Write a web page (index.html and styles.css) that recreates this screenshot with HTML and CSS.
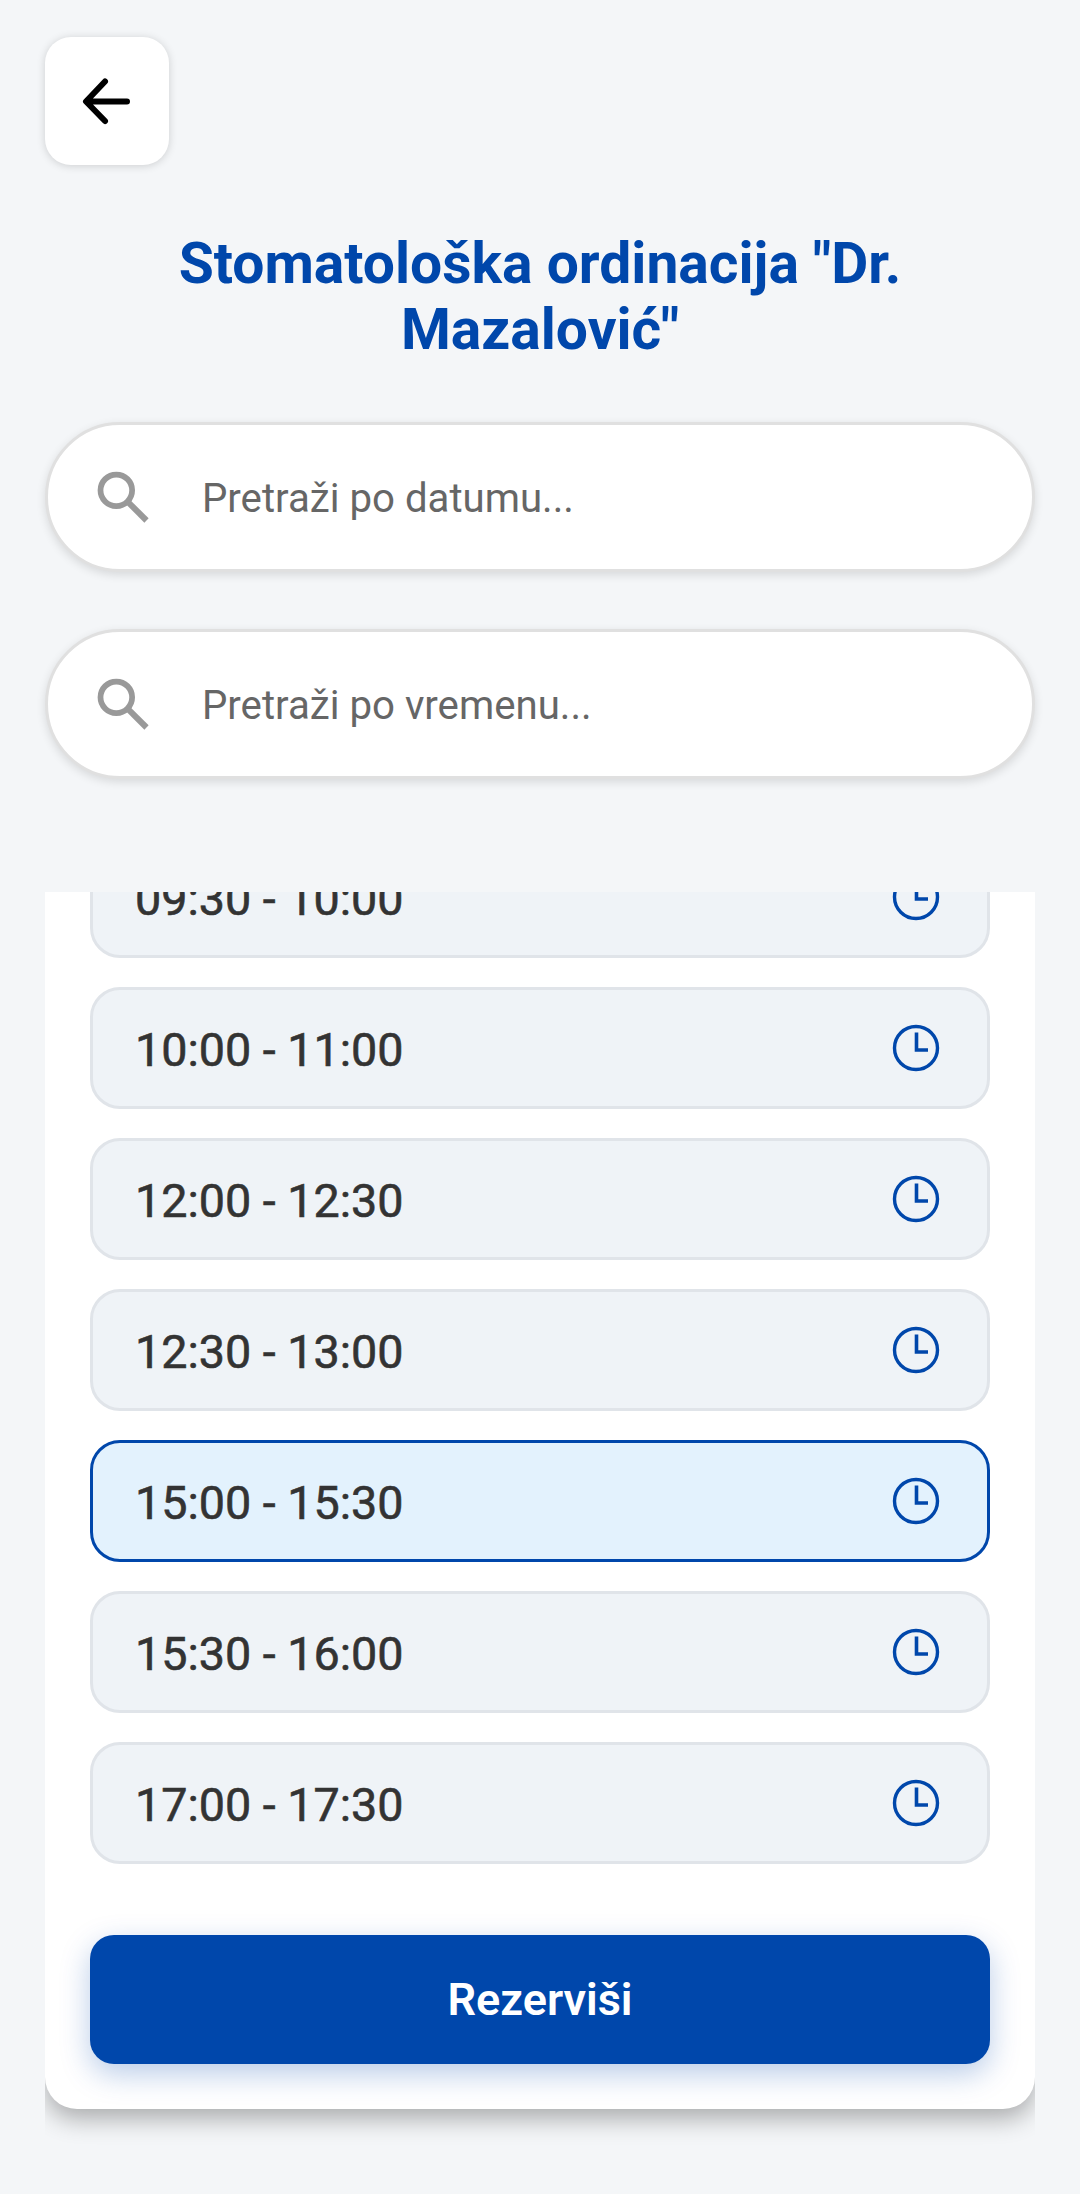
FILE: index.html
```html
<!DOCTYPE html>
<html lang="hr">
<head>
<meta charset="utf-8">
<title>Rezervacija termina</title>
<link rel="stylesheet" href="styles.css">
</head>
<body>
<svg class="defs" width="0" height="0" aria-hidden="true">
  <symbol id="search" viewBox="0 0 24 24"><circle cx="9.500" cy="9.500" r="5.500" fill="none" stroke="currentColor" stroke-width="2"/><path d="M13.500 13.500 20 20" fill="none" stroke="currentColor" stroke-width="2.100"/></symbol>
  <symbol id="clock" viewBox="0 0 48 48"><circle cx="24" cy="24" r="21.500" fill="none" stroke="currentColor" stroke-width="3.400"/><path d="M24.500 8.500V26H36" fill="none" stroke="currentColor" stroke-width="3.600"/></symbol>
</svg>
<main class="screen">
  <button class="back" type="button" aria-label="Natrag">
    <svg class="back-icon" viewBox="0 0 60 60"><path d="M50 30.500H9.500M28 10.500 9 30.500 28 50" fill="none" stroke="#000" stroke-width="6" stroke-linecap="round" stroke-linejoin="round"/></svg>
  </button>
  <h1 class="title">Stomatološka ordinacija "Dr. Mazalović"</h1>
  <div class="search"><svg class="search-icon"><use href="#search"/></svg><span class="placeholder">Pretraži po datumu...</span></div>
  <div class="search search-second"><svg class="search-icon"><use href="#search"/></svg><span class="placeholder">Pretraži po vremenu...</span></div>
  <div class="card-clip">
    <section class="card">
      <div class="list-view">
        <ul class="slots">
          <li class="slot"><span class="slot-time">09:30 - 10:00</span><svg class="clock"><use href="#clock"/></svg></li>
          <li class="slot"><span class="slot-time">10:00 - 11:00</span><svg class="clock"><use href="#clock"/></svg></li>
          <li class="slot"><span class="slot-time">12:00 - 12:30</span><svg class="clock"><use href="#clock"/></svg></li>
          <li class="slot"><span class="slot-time">12:30 - 13:00</span><svg class="clock"><use href="#clock"/></svg></li>
          <li class="slot slot-selected"><span class="slot-time">15:00 - 15:30</span><svg class="clock"><use href="#clock"/></svg></li>
          <li class="slot"><span class="slot-time">15:30 - 16:00</span><svg class="clock"><use href="#clock"/></svg></li>
          <li class="slot"><span class="slot-time">17:00 - 17:30</span><svg class="clock"><use href="#clock"/></svg></li>
        </ul>
      </div>
      <button class="reserve" type="button">Rezerviši</button>
    </section>
  </div>
</main>
</body>
</html>
```
FILE: styles.css
```css
* { box-sizing: border-box; }
html, body { margin: 0; padding: 0; }
body {
  width: 1080px;
  height: 2194px;
  overflow: hidden;
  background: #f4f6f8;
  font-family: Roboto, "Noto Sans", sans-serif;
}
.defs { position: absolute; }
.screen { display: flex; flex-direction: column; padding-top: 37px; }

.back {
  display: flex;
  align-items: center;
  justify-content: center;
  width: 124px;
  height: 128px;
  margin-left: 45px;
  padding: 0;
  border: 0;
  border-radius: 26px;
  background: #fff;
  box-shadow: 0 1px 8px rgba(0, 0, 0, .16);
}
.back-icon { width: 60px; height: 60px; }

.title {
  margin: 66px 45px 59px;
  padding: 0 40px;
  font-size: 57px;
  line-height: 66px;
  font-weight: 700;
  text-align: center;
  color: #0047ab;
}

.search {
  display: flex;
  align-items: center;
  gap: 44px;
  width: 990px;
  height: 150px;
  margin-left: 45px;
  padding-left: 41px;
  background: #fff;
  border: 3px solid #e0e0e0;
  border-radius: 75px;
  box-shadow: 0 3px 10px rgba(0, 0, 0, .12);
}
.search-second { margin-top: 57px; }
.search-icon { width: 69px; height: 69px; color: #999; flex: none; }
.placeholder { padding-top: 3px; font-size: 40.200px; color: #666; }

.card-clip {
  width: 990px;
  height: 1260px;
  margin: 113px 0 0 45px;
  overflow: hidden;
}
.card {
  display: flex;
  flex-direction: column;
  height: 1217px;
  background: #fff;
  border-radius: 0 0 32px 32px;
  box-shadow: 0 10px 24px rgba(0, 0, 0, .3);
  overflow: hidden;
}
.list-view { height: 1003px; overflow: hidden; padding: 0 45px; flex: none; }
.slots {
  display: flex;
  flex-direction: column;
  gap: 29px;
  margin: -56px 0 0;
  padding: 0;
  list-style: none;
}
.slot {
  display: flex;
  align-items: center;
  justify-content: space-between;
  height: 122px;
  padding: 0 47px 0 42px;
  background: #eff3f7;
  border: 3px solid #e0e4e9;
  border-radius: 30px;
}
.slot-time {
  padding-top: 4px;
  font-size: 46.700px;
  font-weight: 400;
  -webkit-text-stroke: .6px #333;
  color: #333;
}
.slot-selected { background: #e3f2fd; border-color: #0047ab; }
.clock { width: 48px; height: 48px; color: #0047ab; flex: none; }

.reserve {
  display: block;
  width: 900px;
  height: 129px;
  margin: 40px 45px 0;
  padding: 0;
  border: 0;
  border-radius: 24px;
  background: #0047ab;
  box-shadow: 0 10px 30px rgba(0, 71, 171, .28);
  font-family: inherit;
  font-size: 45px;
  font-weight: 600;
  color: #fff;
}
```
